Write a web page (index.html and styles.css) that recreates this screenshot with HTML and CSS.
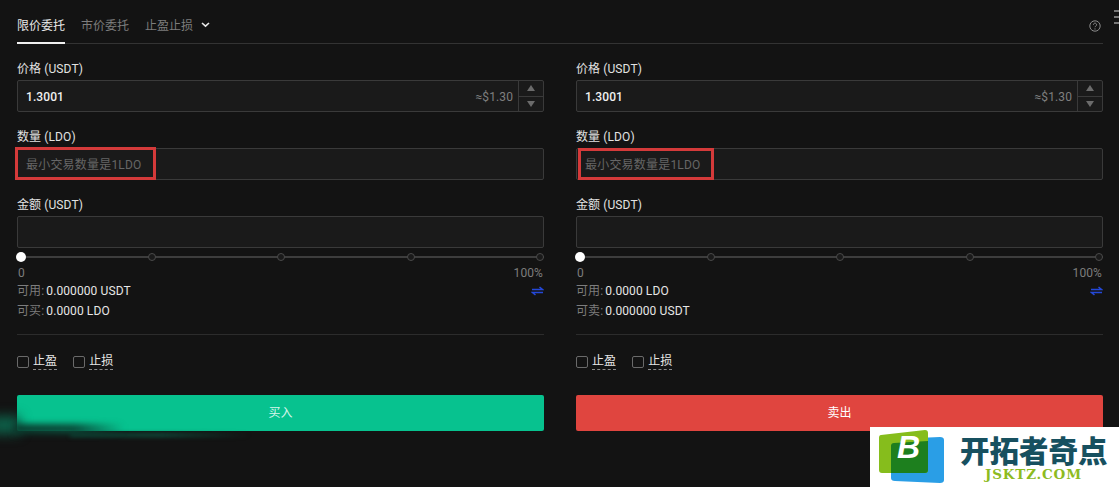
FILE: index.html
```html
<!DOCTYPE html>
<html lang="zh">
<head>
<meta charset="utf-8">
<title>交易</title>
<link rel="stylesheet" href="styles.css">
</head>
<body>
<div class="page">
  <div class="tabs">
    <div class="tab active">限价委托</div>
    <div class="tab">市价委托</div>
    <div class="tab tab-drop">止盈止损
      <svg class="chev" width="9" height="6" viewBox="0 0 9 6"><path d="M1 1l3.5 3.2L8 1" fill="none" stroke="#e8e8e8" stroke-width="1.6"/></svg>
    </div>
    <svg class="help" width="12" height="12" viewBox="0 0 12 12"><circle cx="6" cy="6" r="5.2" fill="none" stroke="#8a8a8a"/><path d="M4.4 4.7a1.6 1.6 0 1 1 2.4 1.4c-.5.3-.8.6-.8 1.1" fill="none" stroke="#8a8a8a"/><circle cx="6" cy="8.9" r=".6" fill="#8a8a8a"/></svg>
  </div>
  <div class="columns">
    <section class="col">
      <div class="label">价格 (USDT)</div>
      <div class="input"><span class="val">1.3001</span><span class="approx">≈$1.30</span><div class="stepper"><div class="step"><i class="up"></i></div><div class="step"><i class="down"></i></div></div></div>
      <div class="label">数量 (LDO)</div>
      <div class="input"><span class="ph">最小交易数量是1LDO</span></div>
      <div class="label">金额 (USDT)</div>
      <div class="input"></div>
      <div class="slider"><b class="knob"></b><b class="dot"></b><b class="dot"></b><b class="dot"></b><b class="dot"></b></div>
      <div class="ends"><span>0</span><span>100%</span></div>
      <div class="info"><span><em>可用:</em> 0.000000 USDT</span>
        <svg class="swap" width="13" height="10" viewBox="0 0 13 10"><path d="M1 3.5h10.5L8.5 1M12 6.5H1.5L4.5 9" fill="none" stroke="#2448d8" stroke-width="1.5"/></svg></div>
      <div class="info"><span><em>可买:</em> 0.0000 LDO</span></div>
      <div class="rule"></div>
      <div class="checks"><label class="check"><i></i><span>止盈</span></label><label class="check"><i></i><span>止损</span></label></div>
      <button class="btn buy">买入</button>
    </section>
    <section class="col">
      <div class="label">价格 (USDT)</div>
      <div class="input"><span class="val">1.3001</span><span class="approx">≈$1.30</span><div class="stepper"><div class="step"><i class="up"></i></div><div class="step"><i class="down"></i></div></div></div>
      <div class="label">数量 (LDO)</div>
      <div class="input"><span class="ph">最小交易数量是1LDO</span></div>
      <div class="label">金额 (USDT)</div>
      <div class="input"></div>
      <div class="slider"><b class="knob"></b><b class="dot"></b><b class="dot"></b><b class="dot"></b><b class="dot"></b></div>
      <div class="ends"><span>0</span><span>100%</span></div>
      <div class="info"><span><em>可用:</em> 0.0000 LDO</span>
        <svg class="swap" width="13" height="10" viewBox="0 0 13 10"><path d="M1 3.5h10.5L8.5 1M12 6.5H1.5L4.5 9" fill="none" stroke="#2448d8" stroke-width="1.5"/></svg></div>
      <div class="info"><span><em>可卖:</em> 0.000000 USDT</span></div>
      <div class="rule"></div>
      <div class="checks"><label class="check"><i></i><span>止盈</span></label><label class="check"><i></i><span>止损</span></label></div>
      <button class="btn sell">卖出</button>
    </section>
  </div>
</div>

<div class="menu-edge"><i></i><i></i><i></i></div>
<div class="mark mark-left"></div>
<div class="mark mark-right"></div>
<div class="glow glow-side"></div>
<div class="glow glow-shade"></div>
<div class="glow glow-line"></div>

<div class="brand">
  <svg class="brand-icon" width="66" height="56" viewBox="0 0 66 56">
    <path d="M16 10L62 8q4 0 4 3v40q0 3-4 3l-45-2q-4 0-4-3V13q0-3 3-3z" fill="#2a9ee6"/>
    <path d="M3 6L47 1q3 0 3 3v37q0 3-3 3H4q-3 0-3-3V9q0-3 2-3z" fill="#86bd1c"/>
    <path d="M16 14L50 12v29q0 3-3 3H13V17q0-3 3-3z" fill="#1d7f1e"/>
    <text x="19" y="29" class="brand-b">B</text>
  </svg>
  <div class="brand-text">
    <div class="brand-cn">开拓者奇点</div>
    <div class="brand-en">JSKTZ.COM</div>
  </div>
</div>
</body>
</html>
```
FILE: styles.css
```css
* { box-sizing: border-box; }
html, body { margin: 0; height: 100%; }
body {
  background: #131313;
  color: #e6e6e6;
  font: 12px/16px Roboto, "Noto Sans CJK SC", sans-serif;
  letter-spacing: 0.1px;
  overflow: hidden;
  position: relative;
}
.page { padding: 0 16px 0 17px; }
.tabs {
  display: flex;
  gap: 16px;
  height: 44px;
  border-bottom: 1px solid #333;
  position: relative;
  letter-spacing: 0;
}
.tab {
  width: 48px;
  white-space: nowrap;
  padding-top: 18px;
  color: #7d7d7d;
  height: 44px;
}
.tab.active {
  color: #e8e8e8;
  border-bottom: 2px solid #f0f0f0;
}
.tab-drop { display: flex; align-items: flex-start; gap: 8px; width: auto; }
.chev { margin-top: 4px; }
.help { position: absolute; right: 2px; top: 20px; }
.columns { display: flex; gap: 32px; }
.col { flex: 1; min-width: 0; }
.label {
  height: 36px;
  padding-top: 17px;
  line-height: 16px;
  color: #e2e2e2;
}
.input {
  height: 32px;
  background: #1a1a1a;
  border: 1px solid #3a3a3a;
  border-radius: 2px;
  display: flex;
  align-items: center;
  padding-left: 8px;
}
.val { color: #f0f0f0; font-weight: 500; padding-top: 1px; }
.approx { margin-left: auto; color: #7f7f7f; padding: 1px 5px 0 0; }
.ph { color: #666; padding-top: 1px; letter-spacing: 0.2px; }
.stepper {
  width: 25px;
  align-self: stretch;
  border-left: 1px solid #3a3a3a;
  display: flex;
  flex-direction: column;
}
.step {
  flex: 1;
  display: flex;
  align-items: center;
  justify-content: center;
}
.step + .step { border-top: 1px solid #3a3a3a; }
.up, .down { width: 0; height: 0; border-left: 4px solid transparent; border-right: 4px solid transparent; }
.up { border-bottom: 6px solid #6b6b6b; }
.down { border-top: 6px solid #6b6b6b; }
.slider {
  height: 2px;
  margin-top: 8px;
  background: #3d3d3d;
  display: flex;
  justify-content: space-between;
  align-items: center;
}
.knob { width: 10px; height: 10px; margin-left: -1px; background: #fff; border-radius: 50%; }
.dot { width: 8px; height: 8px; background: #1a1a1a; border: 1px solid #4a4a4a; border-radius: 50%; }
.ends {
  display: flex;
  justify-content: space-between;
  color: #7d7d7d;
  margin-top: 7px;
  padding: 0 1px;
  height: 16px;
}
.info {
  display: flex;
  justify-content: space-between;
  align-items: center;
  color: #e6e6e6;
  height: 20px;
}
.info em { font-style: normal; color: #7d7d7d; margin-right: -1px; }
.rule { height: 1px; background: #2c2c2c; margin-top: 13px; }
.checks { display: flex; gap: 16px; margin-top: 19px; height: 16px; }
.check { display: flex; align-items: center; gap: 4px; }
.check i { width: 12px; height: 12px; border: 1px solid #6a6a6a; border-radius: 2px; }
.check span { border-bottom: 1px dashed #8a8a8a; line-height: 15px; color: #e6e6e6; }
.btn {
  display: block;
  width: 100%;
  height: 36px;
  margin-top: 25px;
  border: 0;
  border-radius: 2px;
  font: inherit;
  color: #fff;
}
.buy { background: #07c28f; color: #d6f5ea; }
.sell { background: #e0453f; }

.menu-edge { position: absolute; left: 1114px; top: 10px; display: flex; flex-direction: column; gap: 4px; }
.menu-edge i { display: block; width: 5px; height: 2px; background: #777; }
.mark { position: absolute; border: 3px solid #d43a3a; }
.mark-left { left: 15px; top: 147px; width: 141px; height: 33px; }
.mark-right { left: 578px; top: 148px; width: 136px; height: 32px; }
.glow { position: absolute; }
.glow-side {
  left: -10px; top: 416px; width: 30px; height: 18px;
  background: #0d5f48;
  filter: blur(6px);
}
.glow-shade {
  left: 14px; top: 424px; width: 110px; height: 10px;
  background: linear-gradient(90deg, #0a3b2e, #0a4a39 55%, transparent);
  filter: blur(3px);
}
.glow-line {
  left: 70px; top: 433px; width: 180px; height: 4px;
  background: linear-gradient(90deg, #0b3f31, #0d4c3b 50%, transparent);
  filter: blur(2px);
}
.brand {
  position: absolute;
  left: 870px;
  top: 427px;
  width: 249px;
  height: 60px;
  background: #fff;
  display: flex;
  gap: 16px;
  padding: 2px 0 0 8px;
  letter-spacing: 0;
}
.brand-b { font: italic 900 32px "Liberation Sans", sans-serif; fill: #fff; }
.brand-icon { flex: none; }
.brand-text { width: 147px; text-align: center; }
.brand-cn { font: 900 29.5px/30px "Noto Sans CJK SC", sans-serif; color: #17505f; white-space: nowrap; margin-top: 5px; }
.brand-en { font: 700 13.5px/16px "DejaVu Serif", serif; color: #8dbb1f; letter-spacing: 0.8px; margin-top: 2px; }
```
